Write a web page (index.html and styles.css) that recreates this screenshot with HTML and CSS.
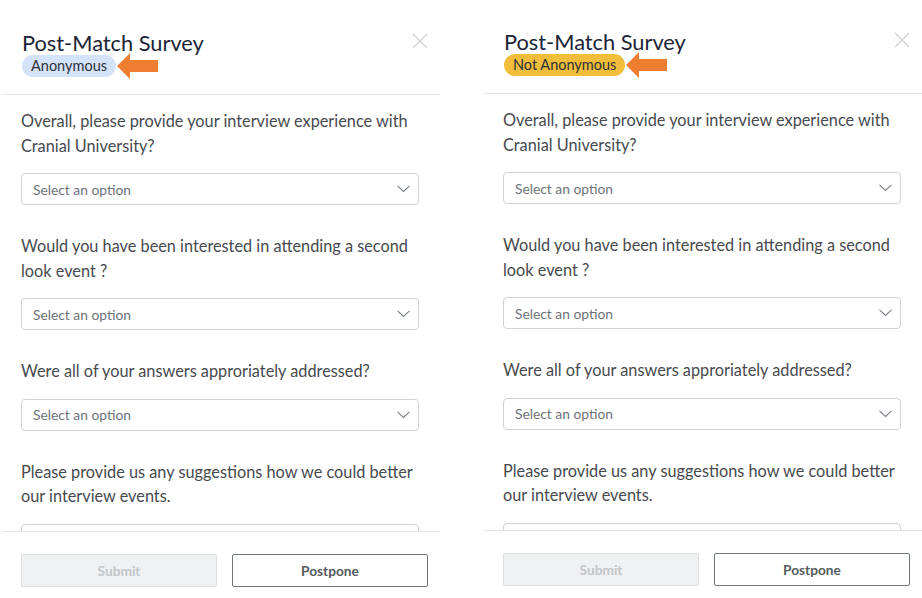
FILE: index.html
```html
<!DOCTYPE html>
<html>
<head>
<meta charset="utf-8">
<link rel="stylesheet" href="styles.css">
</head>
<body>
<div class="screens">
  <section class="modal modal-left">
    <header class="modal-header">
      <div class="titles">
        <h1 class="title">Post-Match Survey</h1>
        <div class="badge-row">
          <span class="badge badge-anon">Anonymous</span>
          <svg class="arrow" width="42" height="26" viewBox="0 0 42 26"><polygon points="0,13 13,0 13,7 41,7 41,19 13,19 13,26" fill="#ed7d31"/></svg>
        </div>
      </div>
      <svg class="close" width="16" height="16" viewBox="0 0 16 16"><path d="M1 1L15 15M15 1L1 15" stroke="#cfd1d4" stroke-width="1.3"/></svg>
    </header>
    <div class="modal-body">
      <div class="question">Overall, please provide your interview experience with Cranial University?</div>
      <div class="select"><span>Select an option</span><svg width="13" height="8" viewBox="0 0 13 8"><path d="M0.5 0.8L6.5 6.5L12.5 0.8" fill="none" stroke="#7a7f87" stroke-width="1.1"/></svg></div>
      <div class="question">Would you have been interested in attending a second look event ?</div>
      <div class="select"><span>Select an option</span><svg width="13" height="8" viewBox="0 0 13 8"><path d="M0.5 0.8L6.5 6.5L12.5 0.8" fill="none" stroke="#7a7f87" stroke-width="1.1"/></svg></div>
      <div class="question">Were all of your answers approriately addressed?</div>
      <div class="select"><span>Select an option</span><svg width="13" height="8" viewBox="0 0 13 8"><path d="M0.5 0.8L6.5 6.5L12.5 0.8" fill="none" stroke="#7a7f87" stroke-width="1.1"/></svg></div>
      <div class="question">Please provide us any suggestions how we could better our interview events.</div>
      <div class="textarea"></div>
    </div>
    <footer class="modal-footer">
      <button class="btn btn-disabled">Submit</button>
      <button class="btn btn-outline">Postpone</button>
    </footer>
  </section>

  <section class="modal modal-right">
    <header class="modal-header">
      <div class="titles">
        <h1 class="title">Post-Match Survey</h1>
        <div class="badge-row">
          <span class="badge badge-named">Not Anonymous</span>
          <svg class="arrow" width="42" height="26" viewBox="0 0 42 26"><polygon points="0,13 13,0 13,7 41,7 41,19 13,19 13,26" fill="#ed7d31"/></svg>
        </div>
      </div>
      <svg class="close" width="16" height="16" viewBox="0 0 16 16"><path d="M1 1L15 15M15 1L1 15" stroke="#cfd1d4" stroke-width="1.3"/></svg>
    </header>
    <div class="modal-body">
      <div class="question">Overall, please provide your interview experience with Cranial University?</div>
      <div class="select"><span>Select an option</span><svg width="13" height="8" viewBox="0 0 13 8"><path d="M0.5 0.8L6.5 6.5L12.5 0.8" fill="none" stroke="#7a7f87" stroke-width="1.1"/></svg></div>
      <div class="question">Would you have been interested in attending a second look event ?</div>
      <div class="select"><span>Select an option</span><svg width="13" height="8" viewBox="0 0 13 8"><path d="M0.5 0.8L6.5 6.5L12.5 0.8" fill="none" stroke="#7a7f87" stroke-width="1.1"/></svg></div>
      <div class="question">Were all of your answers approriately addressed?</div>
      <div class="select"><span>Select an option</span><svg width="13" height="8" viewBox="0 0 13 8"><path d="M0.5 0.8L6.5 6.5L12.5 0.8" fill="none" stroke="#7a7f87" stroke-width="1.1"/></svg></div>
      <div class="question">Please provide us any suggestions how we could better our interview events.</div>
      <div class="textarea"></div>
    </div>
    <footer class="modal-footer">
      <button class="btn btn-disabled">Submit</button>
      <button class="btn btn-outline">Postpone</button>
    </footer>
  </section>
</div>
</body>
</html>
```

FILE: styles.css
```css
* { box-sizing: border-box; }
html, body { margin: 0; padding: 0; background: #fff; }
body {
  width: 922px;
  height: 598px;
  overflow: hidden;
  font-family: "Lato", "Liberation Sans", sans-serif;
}
.screens {
  display: flex;
  gap: 42px;
  height: 598px;
}
.modal {
  width: 440px;
  height: 598px;
  display: flex;
  flex-direction: column;
}
.modal-right { margin-top: -1px; }
.modal-header {
  display: flex;
  justify-content: space-between;
  align-items: flex-start;
  padding: 30px 12px 0 20px;
  height: 95px;
  border-bottom: 1px solid #e3e4e6;
  margin-left: 2px;
}
.title {
  margin: 0;
  font-size: 21.8px;
  font-weight: 400;
  line-height: 25px;
  color: #1b2536;
}
.badge-row {
  display: flex;
  align-items: center;
  margin-top: -2px;
}
.badge {
  display: inline-block;
  height: 22px;
  line-height: 22px;
  padding: 0 9px;
  border-radius: 11px;
  font-size: 14.5px;
  color: #2e3238;
}
.badge-anon { background: #d5e3fa; }
.badge-named { background: #f1bd3a; }
.arrow { margin-left: 1px; display: block; }
.close { margin-top: 3px; }
.modal-body {
  flex: 1;
  overflow: hidden;
  padding: 12px 21px 0 21px;
}
.question {
  padding-top: 2px;
  font-size: 16.3px;
  line-height: 24.5px;
  color: #474a4f;
}
.select {
  margin: 15px 0 27px 0;
  height: 32px;
  border: 1px solid #cfd2d6;
  border-radius: 4px;
  display: flex;
  align-items: center;
  justify-content: space-between;
  padding: 0 8px 0 11px;
  font-size: 13.8px;
  color: #6d7279;
}
.textarea {
  margin-top: 15px;
  height: 80px;
  border: 1px solid #cfd2d6;
  border-radius: 4px;
}
.modal-footer {
  border-top: 1px solid #e3e4e6;
  margin-left: 2px;
  padding: 22px 12px 0 19px;
  height: 67px;
  display: flex;
  gap: 15px;
}
.btn {
  width: 196px;
  height: 33px;
  border-radius: 2px;
  font-family: inherit;
  font-size: 13.7px;
  font-weight: 700;
  padding: 0;
}
.btn-disabled {
  background: #f0f1f2;
  border: 1px solid #dcdee1;
  color: #c3c6ca;
}
.btn-outline {
  background: #fff;
  border: 1px solid #6f757d;
  color: #555a61;
}
```
